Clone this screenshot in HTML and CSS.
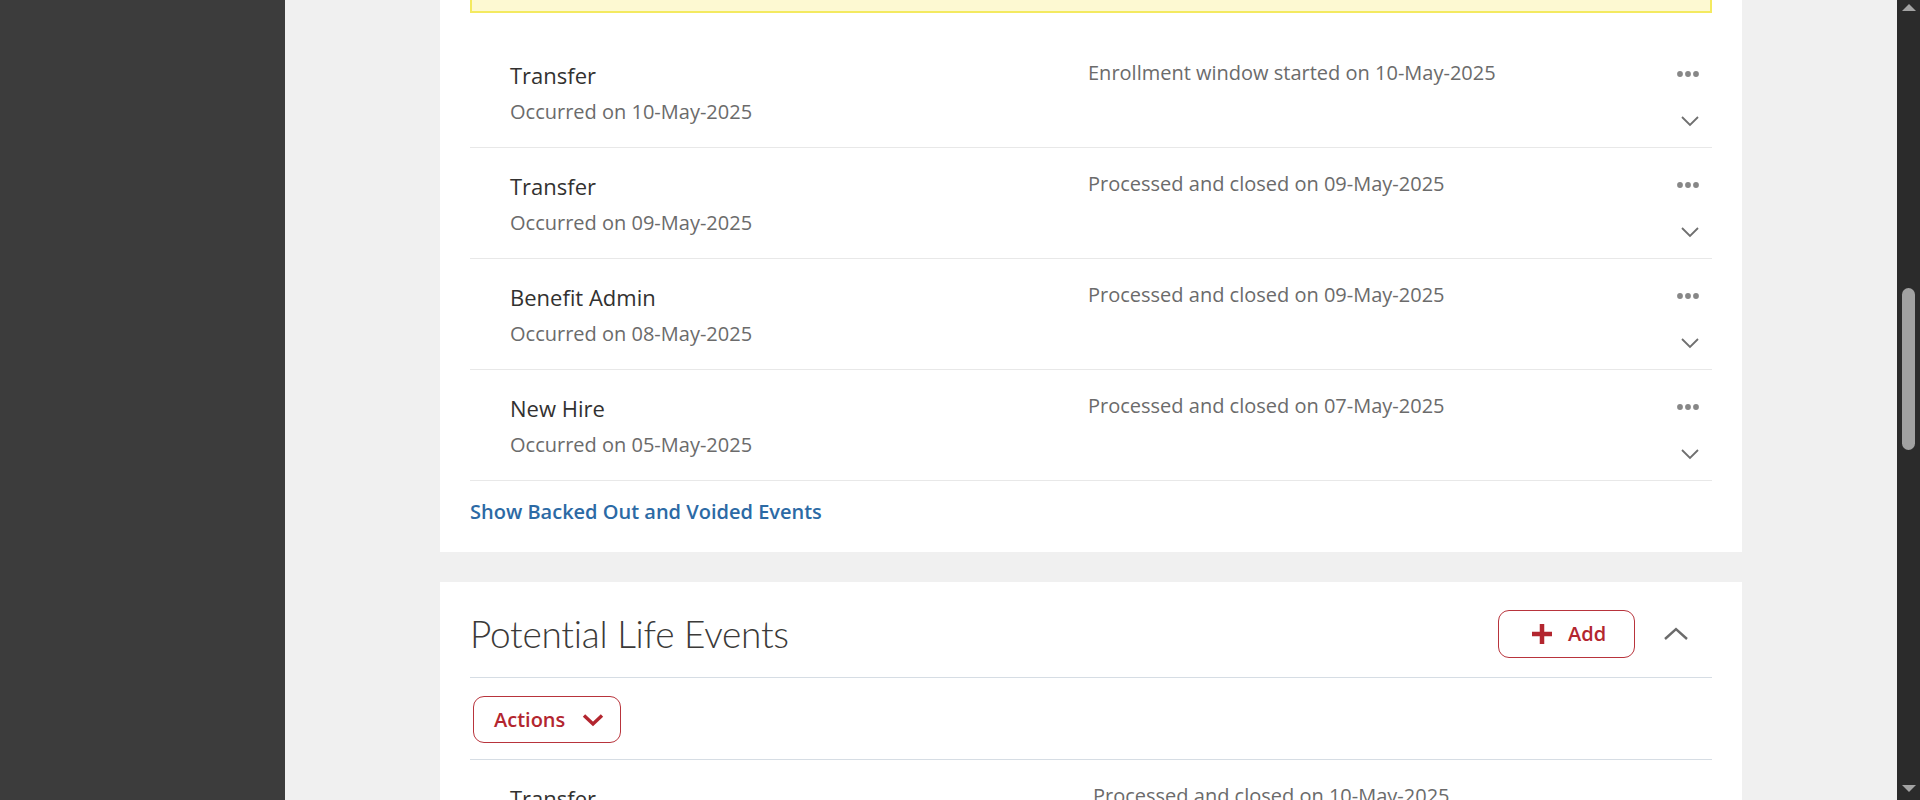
FILE: index.html
```html
<!DOCTYPE html>
<html lang="en">
<head>
<meta charset="utf-8">
<title>Life Events</title>
<link rel="stylesheet" href="styles.css">
</head>
<body>
<div class="app">
  <aside class="sidebar"></aside>
  <main class="main">
    <div class="content">
      <section class="card card-events">
        <div class="banner"></div>
        <ul class="event-list">
          <li class="event-row">
            <div class="event-info">
              <div class="event-title">Transfer</div>
              <div class="event-date">Occurred on 10-May-2025</div>
            </div>
            <div class="event-status">Enrollment window started on 10-May-2025</div>
            <div class="event-actions">
              <svg class="icon-dots" width="24" height="8" viewBox="0 0 24 8"><circle cx="4" cy="4" r="2.9"/><circle cx="12" cy="4" r="2.9"/><circle cx="20" cy="4" r="2.9"/></svg>
              <svg class="icon-chev" width="20" height="12" viewBox="0 0 20 12"><path d="M2 2 L10 10 L18 2"/></svg>
            </div>
          </li>
          <li class="event-row">
            <div class="event-info">
              <div class="event-title">Transfer</div>
              <div class="event-date">Occurred on 09-May-2025</div>
            </div>
            <div class="event-status">Processed and closed on 09-May-2025</div>
            <div class="event-actions">
              <svg class="icon-dots" width="24" height="8" viewBox="0 0 24 8"><circle cx="4" cy="4" r="2.9"/><circle cx="12" cy="4" r="2.9"/><circle cx="20" cy="4" r="2.9"/></svg>
              <svg class="icon-chev" width="20" height="12" viewBox="0 0 20 12"><path d="M2 2 L10 10 L18 2"/></svg>
            </div>
          </li>
          <li class="event-row">
            <div class="event-info">
              <div class="event-title">Benefit Admin</div>
              <div class="event-date">Occurred on 08-May-2025</div>
            </div>
            <div class="event-status">Processed and closed on 09-May-2025</div>
            <div class="event-actions">
              <svg class="icon-dots" width="24" height="8" viewBox="0 0 24 8"><circle cx="4" cy="4" r="2.9"/><circle cx="12" cy="4" r="2.9"/><circle cx="20" cy="4" r="2.9"/></svg>
              <svg class="icon-chev" width="20" height="12" viewBox="0 0 20 12"><path d="M2 2 L10 10 L18 2"/></svg>
            </div>
          </li>
          <li class="event-row">
            <div class="event-info">
              <div class="event-title">New Hire</div>
              <div class="event-date">Occurred on 05-May-2025</div>
            </div>
            <div class="event-status">Processed and closed on 07-May-2025</div>
            <div class="event-actions">
              <svg class="icon-dots" width="24" height="8" viewBox="0 0 24 8"><circle cx="4" cy="4" r="2.9"/><circle cx="12" cy="4" r="2.9"/><circle cx="20" cy="4" r="2.9"/></svg>
              <svg class="icon-chev" width="20" height="12" viewBox="0 0 20 12"><path d="M2 2 L10 10 L18 2"/></svg>
            </div>
          </li>
        </ul>
        <a class="link" href="#">Show Backed Out and Voided Events</a>
      </section>

      <section class="card card-potential">
        <header class="card-header">
          <h2 class="card-title">Potential Life Events</h2>
          <button class="btn btn-add" type="button">
            <svg width="22" height="22" viewBox="0 0 22 22"><path d="M11 1 V21 M1 11 H21"/></svg>
            <span>Add</span>
          </button>
          <button class="btn-collapse" type="button" aria-label="Collapse">
            <svg width="26" height="14" viewBox="0 0 26 14"><path d="M2 12 L13 2 L24 12"/></svg>
          </button>
        </header>
        <div class="toolbar">
          <button class="btn btn-actions" type="button">
            <span>Actions</span>
            <svg width="22" height="14" viewBox="0 0 22 14"><path d="M2 2.5 L11 11 L20 2.5"/></svg>
          </button>
        </div>
        <ul class="event-list event-list-potential">
          <li class="event-row">
            <div class="event-info">
              <div class="event-title">Transfer</div>
              <div class="event-date">Occurred on 10-May-2025</div>
            </div>
            <div class="event-status">Processed and closed on 10-May-2025</div>
            <div class="event-actions">
              <svg class="icon-dots" width="24" height="8" viewBox="0 0 24 8"><circle cx="4" cy="4" r="2.9"/><circle cx="12" cy="4" r="2.9"/><circle cx="20" cy="4" r="2.9"/></svg>
            </div>
          </li>
        </ul>
      </section>
    </div>
  </main>
  <div class="scrollbar">
    <div class="sb-arrow sb-up"></div>
    <div class="sb-track"><div class="sb-thumb"></div></div>
    <div class="sb-arrow sb-down"></div>
  </div>
</div>
</body>
</html>
```

FILE: styles.css
```css
* { box-sizing: border-box; }

html, body {
  margin: 0;
  padding: 0;
  height: 800px;
  overflow: hidden;
}

body {
  font-family: "Open Sans", "Noto Sans", sans-serif;
  color: #323130;
  background: #f0f0f0;
}

.app {
  display: flex;
  height: 800px;
}

.sidebar {
  width: 285px;
  flex: none;
  background: #3c3c3c;
}

.main {
  flex: 1;
  background: #f0f0f0;
  overflow: hidden;
}

.content {
  width: 1302px;
  margin: 0 auto;
}

.card {
  background: #ffffff;
  padding: 0 30px;
}

.card-events {
  padding-bottom: 26px;
}

.banner {
  height: 13px;
  background: #fdf9d2;
  border: 2px solid #f4ea60;
  border-top: 0;
}

.event-list {
  list-style: none;
  margin: 24px 0 0;
  padding: 0;
}

.event-row {
  display: grid;
  grid-template-columns: 578px 1fr auto;
  height: 111px;
  padding: 0 12px 0 40px;
  border-bottom: 1px solid #e8e8e8;
}

.event-info {
  padding-top: 23px;
}

.event-title {
  font-size: 22px;
  line-height: 30px;
  color: #323130;
}

.event-date {
  margin-top: 8px;
  font-size: 20px;
  line-height: 28px;
  color: #6b6b6b;
}

.event-status {
  padding-top: 22px;
  font-size: 20px;
  line-height: 28px;
  color: #6b6b6b;
}

.event-actions {
  display: flex;
  flex-direction: column;
  align-items: flex-end;
  padding-top: 33px;
}

.icon-dots {
  display: block;
  fill: #878787;
}

.icon-chev {
  display: block;
  margin-top: 37px;
  fill: none;
  stroke: #6f6f6f;
  stroke-width: 1.8;
}

.link {
  display: inline-block;
  margin-top: 17px;
  font-size: 20px;
  line-height: 28px;
  font-weight: 600;
  color: #2c6aa5;
  text-decoration: none;
}

.card-potential {
  margin-top: 30px;
}

.card-header {
  display: flex;
  align-items: center;
  padding-top: 10px;
  padding-bottom: 2px;
  min-height: 96px;
  border-bottom: 1px solid #d6dde4;
}

.card-title {
  flex: 1;
  margin: 0;
  padding-top: 2px;
  font-family: Lato, "Open Sans", sans-serif;
  font-weight: 300;
  font-size: 37px;
  letter-spacing: -0.25px;
  line-height: 1.2;
  color: #3b3a39;
}

.btn {
  display: inline-flex;
  align-items: center;
  height: 48px;
  background: #ffffff;
  border: 1px solid #b8343c;
  border-radius: 11px;
  color: #b3262f;
  font-family: "Open Sans", "Noto Sans", sans-serif;
  font-size: 20px;
  font-weight: 600;
  cursor: pointer;
}

.btn svg {
  display: block;
  fill: none;
  stroke: #b3262f;
}

.btn-add {
  width: 137px;
  padding: 0 0 0 32px;
  gap: 15px;
}

.btn-add svg {
  stroke-width: 4.5;
}

.btn-collapse {
  margin: 0 23px 0 28px;
  padding: 0;
  border: 0;
  background: none;
  display: flex;
  cursor: pointer;
}

.btn-collapse svg {
  display: block;
  fill: none;
  stroke: #6b6b6b;
  stroke-width: 2.4;
}

.toolbar {
  padding: 18px 0 16px 3px;
  border-bottom: 1px solid #d6dde4;
}

.btn-actions {
  width: 148px;
  height: 47px;
  padding: 0 0 0 20px;
  gap: 17px;
}

.btn-actions svg {
  stroke-width: 3.4;
}

.event-list-potential {
  margin-top: 0;
}

.event-list-potential .event-row {
  grid-template-columns: 583px 1fr auto;
}

.event-list-potential .event-actions {
  padding-top: 48px;
}

.scrollbar {
  width: 23px;
  flex: none;
  background: #2b2b2b;
  display: flex;
  flex-direction: column;
  align-items: center;
}

.sb-arrow {
  width: 0;
  height: 0;
  border-left: 7px solid transparent;
  border-right: 7px solid transparent;
}

.sb-up {
  margin-top: 4px;
  border-bottom: 7px solid #a3a3a3;
}

.sb-down {
  margin-bottom: 8px;
  border-top: 7px solid #a3a3a3;
}

.sb-track {
  flex: 1;
  width: 100%;
  display: flex;
  flex-direction: column;
  align-items: center;
  padding-top: 277px;
}

.sb-thumb {
  width: 13px;
  height: 162px;
  border-radius: 7px;
  background: #a1a1a1;
}
```
